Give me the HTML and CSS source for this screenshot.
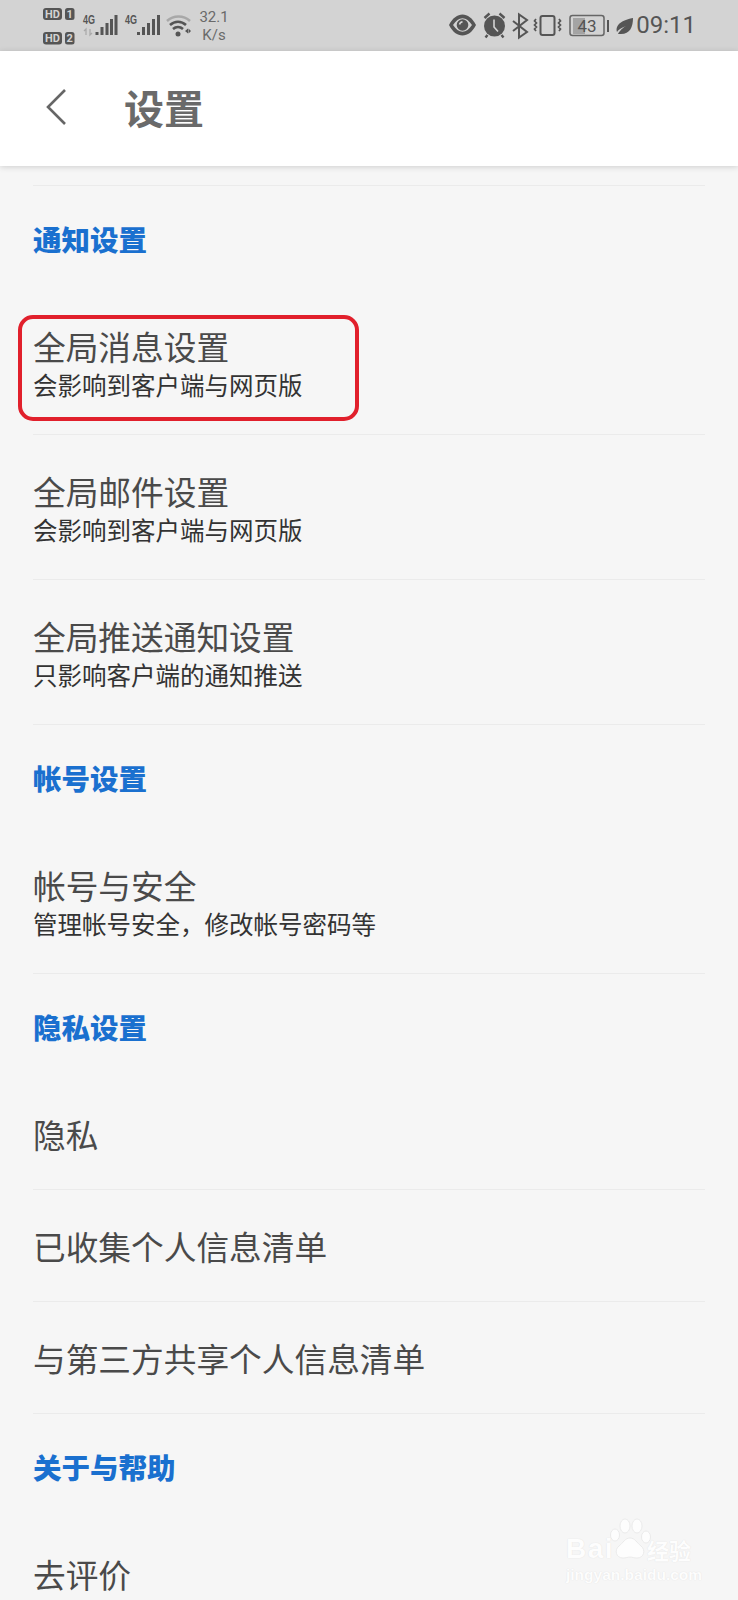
FILE: index.html
```html
<!DOCTYPE html>
<html lang="zh-CN">
<head>
<meta charset="utf-8">
<title>设置</title>
<link rel="stylesheet" href="styles.css">
</head>
<body>
<div class="status">
  <svg class="st-left" width="150" height="51" viewBox="43 0 150 51">
    <g class="ink">
      <rect x="43" y="8" width="19" height="12" rx="3"/>
      <rect x="65" y="8" width="9.500" height="12" rx="2.500"/>
      <rect x="43" y="32" width="19" height="12.500" rx="3"/>
      <rect x="65" y="32" width="9.500" height="12.500" rx="2.500"/>
    </g>
    <g class="hd">
      <text x="52.500" y="18">HD</text><text x="69.700" y="18">1</text>
      <text x="52.500" y="42.300">HD</text><text x="69.700" y="42.300">2</text>
    </g>
    <text class="g4" x="83" y="24" textLength="12" lengthAdjust="spacingAndGlyphs">4G</text>
    <text class="g4" x="125" y="24" textLength="12" lengthAdjust="spacingAndGlyphs">4G</text>
    <path class="arrows" d="M86 35v-6l-2 2M90 29v6l2-2"/>
    <g class="ink">
      <rect x="95.500" y="32" width="3" height="3"/>
      <rect x="100.500" y="27" width="3" height="8"/>
      <rect x="105.500" y="23" width="3" height="12"/>
      <rect x="110" y="19" width="3" height="16"/>
      <rect x="114.500" y="15" width="3" height="20"/>
      <rect x="137" y="32" width="3" height="3"/>
      <rect x="142" y="27" width="3" height="8"/>
      <rect x="147" y="23" width="3" height="12"/>
      <rect x="152" y="19" width="3" height="16"/>
      <rect x="157" y="15" width="3" height="20"/>
      <circle cx="178" cy="34" r="2.500"/>
      <path d="M185 31l3-2.500v5zM188.500 28.500l2.500 2.500-2.500 2.500z"/>
    </g>
    <path class="wifi-dim" d="M167 21c6.500-6 16.500-6 23 0"/>
    <path class="wifi" d="M170 25c4.800-4.300 11.200-4.300 16 0M173 29c3-2.600 7-2.600 10 0"/>
  </svg>
  <div class="speed"><span>32.1</span><span>K/s</span></div>
  <div class="st-right">
    <svg width="190" height="51" viewBox="450 0 190 51">
      <path class="ink" fill-rule="evenodd" d="M450 25c3.500-7 8.500-10.500 13.500-10.500S473.500 18 477 25c-3.500 7-8.500 10.500-13.500 10.500S453.500 32 450 25zm4 0c2.800 4.300 6 6.800 9.500 6.800s6.700-2.500 9.500-6.800c-2.800-4.300-6-6.800-9.500-6.800S456.800 20.700 454 25z"/>
      <circle class="ink" cx="463.500" cy="25" r="5.800"/>
      <path class="cut" d="M460.500 24.500c.4-1.600 1.500-2.500 3-2.600"/>
      <circle class="ink" cx="495.500" cy="26" r="10.500"/>
      <path class="ink-line" d="M485.500 18l5-4.500M505.500 18l-5-4.500M488.500 35l-2 2.500M502.500 35l2 2.500"/>
      <path class="cut" d="M495 19.500v7.500l4 4.500"/>
      <path class="line" d="M514 21l14 11-8 5.500V14.500l8 5.500-14 11"/>
      <rect class="line" x="541.500" y="16" width="14" height="19" rx="2"/>
      <path class="line thin" d="M537 19l-1.500 2 2 2-2 2 2 2-2 2 1.500 2M560 19l1.500 2-2 2 2 2-2 2 2 2-1.500 2"/>
      <path class="ink" d="M619 34c1-2 3-5 8-8-5 2-8 4-9 6-1.500-5 1-11 16-14 0 9-3 16-12 16-1 0-2 0-3 0z"/>
      <rect class="batt-fill" x="574" y="18" width="12" height="16"/>
      <rect class="batt" x="571" y="15.500" width="34" height="20" rx="2.500"/>
      <rect class="ink" x="608" y="20" width="2" height="12"/>
      <text class="batt-num" x="588" y="32">43</text>
    </svg>
    <span class="time">09:11</span>
  </div>
</div>

<header class="bar">
  <svg class="back" width="22" height="38" viewBox="0 0 22 38"><path d="M20 2L3 19l17 17"/></svg>
  <h1>设置</h1>
</header>

<main>
  <div class="lead"></div>

  <h2 class="sec">通知设置</h2>
  <div class="row two">
    <div class="t">全局消息设置</div>
    <div class="s">会影响到客户端与网页版</div>
    <div class="mark"></div>
  </div>
  <div class="row two">
    <div class="t">全局邮件设置</div>
    <div class="s">会影响到客户端与网页版</div>
  </div>
  <div class="row two">
    <div class="t">全局推送通知设置</div>
    <div class="s">只影响客户端的通知推送</div>
  </div>

  <h2 class="sec">帐号设置</h2>
  <div class="row two">
    <div class="t">帐号与安全</div>
    <div class="s">管理帐号安全，修改帐号密码等</div>
  </div>

  <h2 class="sec">隐私设置</h2>
  <div class="row one"><div class="t">隐私</div></div>
  <div class="row one"><div class="t">已收集个人信息清单</div></div>
  <div class="row one"><div class="t">与第三方共享个人信息清单</div></div>

  <h2 class="sec">关于与帮助</h2>
  <div class="row one"><div class="t">去评价</div></div>
</main>

<div class="wm">
  <div class="wm-top">
    <span class="wm-b">Bai</span>
    <svg class="wm-paw" width="44" height="44" viewBox="0 0 44 44">
      <ellipse cx="6" cy="17" rx="4.500" ry="6"/>
      <ellipse cx="16" cy="8" rx="5" ry="7"/>
      <ellipse cx="28" cy="8" rx="5" ry="7"/>
      <ellipse cx="37" cy="19" rx="4.500" ry="6"/>
      <path d="M21 20c5 0 7 5 11 8 5 4 3 12-4 12-3 0-5-1-7-1s-4 1-7 1c-7 0-9-8-4-12 4-3 6-8 11-8z"/>
    </svg>
    <span class="wm-c">经验</span>
  </div>
  <div class="wm-url">jingyan.baidu.com</div>
</div>
</body>
</html>
```

FILE: styles.css
```css
* { box-sizing: border-box; }
html, body { margin: 0; padding: 0; }
body {
  position: relative;
  width: 738px;
  height: 1600px;
  overflow: hidden;
  background: #f6f6f6;
  font-family: "Noto Sans CJK SC", "Noto Sans", sans-serif;
}

.status {
  display: flex;
  align-items: center;
  height: 51px;
  padding-left: 43px;
  background: #d3d3d3;
  color: #5a5a5a;
}
.st-left { display: block; flex: none; }
.speed {
  display: flex;
  flex-direction: column;
  align-items: center;
  width: 38px;
  margin-left: 2px;
  font: 15px/18px Roboto, sans-serif;
  color: #6a6a6a;
}
.st-right {
  display: flex;
  align-items: center;
  margin-left: auto;
  padding-right: 42px;
}
.st-right svg { display: block; }
.time {
  margin-left: -3px;
  font: 24px/51px Roboto, sans-serif;
  color: #555;
}
.ink { fill: #555; }
.hd text {
  font: 700 11px Roboto, sans-serif;
  fill: #d3d3d3;
  text-anchor: middle;
}
.g4 {
  font: 700 12.500px "Liberation Sans", sans-serif;
  fill: #555;
}
.arrows { fill: none; stroke: #aaa; stroke-width: 1.300; }
.wifi { fill: none; stroke: #555; stroke-width: 2.600; }
.wifi-dim { fill: none; stroke: #a8a8a8; stroke-width: 2.600; }
.cut { fill: none; stroke: #d3d3d3; stroke-width: 1.600; }
.ink-line { fill: none; stroke: #555; stroke-width: 2.400; }
.line { fill: none; stroke: #555; stroke-width: 2; }
.thin { stroke-width: 1.700; }
.batt { fill: none; stroke: #666; stroke-width: 1.500; }
.batt-fill { fill: #a4a4a4; }
.batt-num {
  font: 17px Roboto, sans-serif;
  fill: #555;
  text-anchor: middle;
}

.bar {
  position: relative;
  z-index: 1;
  display: flex;
  align-items: center;
  height: 115px;
  padding: 0 0 3px 45px;
  background: #fff;
  box-shadow: 0 1px 6px rgba(0, 0, 0, .16);
}
.back { display: block; flex: none; }
.back path { fill: none; stroke: #666; stroke-width: 2.600; }
.bar h1 {
  margin: 0 0 0 57px;
  font-size: 40px;
  font-weight: 700;
  line-height: 50px;
  color: #6a6a6a;
}

.lead {
  height: 20px;
  margin: 0 33px;
  border-bottom: 1px solid #ebebeb;
}
.sec {
  display: flex;
  align-items: center;
  height: 104px;
  margin: 0;
  padding: 2px 0 0 33px;
  font-size: 28.500px;
  font-weight: 900;
  line-height: 36px;
  color: #1a70cf;
}
.row {
  position: relative;
  margin: 0 33px;
  border-bottom: 1px solid #ebebeb;
}
.row.two { height: 145px; padding-top: 34.500px; }
.row.one {
  display: flex;
  align-items: center;
  height: 112px;
  padding-top: 1px;
}
.t {
  font-size: 32.700px;
  line-height: 42px;
  color: #4a4a4a;
}
.s {
  font-size: 24.500px;
  line-height: 36px;
  color: #333;
}
.mark {
  position: absolute;
  left: -15px;
  top: 25px;
  width: 341px;
  height: 106px;
  border: 4.500px solid #e1202c;
  border-radius: 15px;
}

.wm {
  position: absolute;
  left: 566px;
  top: 1520px;
  width: 134px;
  color: #fff;
  opacity: .85;
  text-shadow: 0 0 1px #d8d8d8;
}
.wm-top {
  display: flex;
  align-items: flex-end;
  height: 42px;
}
.wm-b {
  font: 700 28px/27px "Liberation Sans", sans-serif;
  letter-spacing: 1.500px;
}
.wm-paw {
  display: block;
  flex: none;
  margin-left: -5px;
  fill: #fff;
  stroke: #e4e4e4;
  stroke-width: .8;
}
.wm-c {
  margin-left: -6px;
  font-size: 22px;
  font-weight: 700;
  line-height: 26px;
}
.wm-url {
  margin-top: 4px;
  font: 700 15.500px/18px "Liberation Sans", sans-serif;
  white-space: nowrap;
}
```
